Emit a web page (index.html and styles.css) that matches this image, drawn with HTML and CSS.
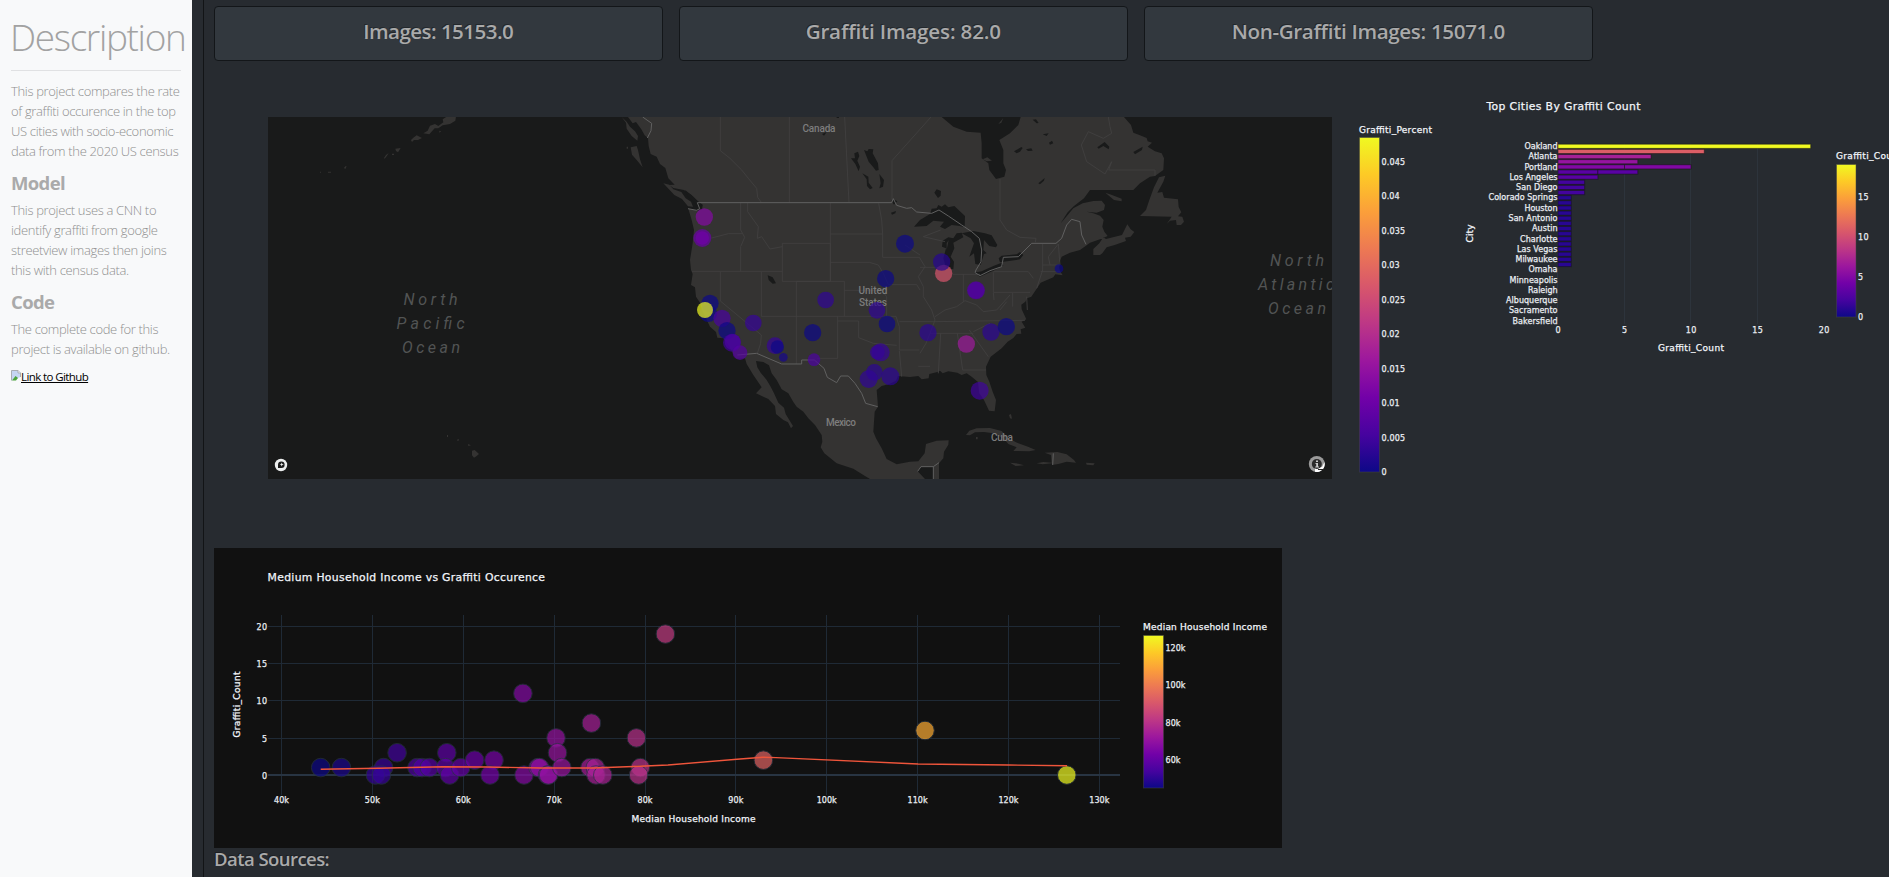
FILE: index.html
```html
<!DOCTYPE html>
<html lang="en">
<head>
<meta charset="utf-8">
<title>Graffiti Dashboard</title>
<link rel="stylesheet" href="styles.css">
</head>
<body>
<div class="page">
  <aside class="sidebar">
    <h1 class="display">Description</h1>
    <hr class="rule">
    <p class="lead">This project compares the rate<br>of graffiti occurence in the top<br>US cities with socio-economic<br>data from the 2020 US census</p>
    <h2 class="subhead">Model</h2>
    <p class="lead">This project uses a CNN to<br>identify graffiti from google<br>streetview images then joins<br>this with census data.</p>
    <h2 class="subhead">Code</h2>
    <p class="lead">The complete code for this<br>project is available on github.</p>
    <a class="repo" href="#"><svg class="broken" viewBox="0 0 10 11"><path d="M.5 10.5V.5H7L9.5 3V7" fill="#c5d5f2" stroke="#a9adb3"/><path d="M1 10.5 4.5 6 7 8 5 10.5Z" fill="#4ba43a"/><path d="M7 .5V3H9.5" fill="#fff" stroke="#a9adb3"/></svg><span class="repo-text">Link to Github</span></a>
  </aside>
  <main class="content">
    <section class="cards">
      <div class="card"><h4 class="stat stat-a">Images: 15153.0</h4></div>
      <div class="card"><h4 class="stat stat-b">Graffiti Images: 82.0</h4></div>
      <div class="card"><h4 class="stat stat-c">Non-Graffiti Images: 15071.0</h4></div>
    </section>
    <section class="plots">
      <svg class="plot" width="1246" height="450" viewBox="214 80 1246 450">
        <defs>
          <linearGradient id="plasma" x1="0" y1="1" x2="0" y2="0">
            <stop offset="0" stop-color="#0d0887"/><stop offset=".111" stop-color="#46039f"/><stop offset=".222" stop-color="#7201a8"/><stop offset=".333" stop-color="#9c179e"/><stop offset=".444" stop-color="#bd3786"/><stop offset=".556" stop-color="#d8576b"/><stop offset=".667" stop-color="#ed7953"/><stop offset=".778" stop-color="#fb9f3a"/><stop offset=".889" stop-color="#fdca26"/><stop offset="1" stop-color="#f0f921"/>
          </linearGradient>
          <clipPath id="mapclip"><rect x="268" y="117" width="1064" height="362"/></clipPath>
        </defs>
        <g clip-path="url(#mapclip)">
          <rect class="water" x="268" y="117" width="1064" height="362"/>
          <g transform="translate(260 110) scale(.33333)">
            <path class="land" d="M453 90 460 83 470 76 486 84 474 90 462 90 456 96ZM490 70 503 62 510 47 525 42 535 48 550 37 548 28 560 20 588 20 586 32 570 42 548 46 535 55 524 55 508 73ZM406 116 422 114 414 127 408 123ZM372 144 378 135 386 129 381 137 374 146ZM396 131H402V135H396ZM252 174 256 169H260L256 177ZM204 185H213V188H204ZM180 185H183V188H180ZM636 1022 644 1020 657 1032 650 1038 642 1043 636 1036ZM624 1002 633 1006 625 1008ZM591 989 597 987 596 992H592ZM561 975H564V981H561ZM538 62 544 64 538 68Z"/>
          </g>
          <g transform="translate(620 110) scale(.33333)">
            <path class="land" d="M24 21 38 40 48 36 64 58 74 76 84 84 86 108 92 132 110 140 120 162 136 174 145 205 164 224 148 225 160 234 192 240 215 256 233 273 248 285 246 300 234 297 237 303 205 296 215 330 222 360 218 400 210 450 213 480 218 492 213 525 225 532 228 560 240 578 248 605 258 625 270 650 288 666 292 683 310 685 325 705 340 732 348 746 375 745 380 762 400 795 425 832 408 850 430 860 445 867 465 888 468 912 490 930 504 937 513 955 519 948 497 912 492 893 475 878 462 850 452 830 440 810 422 788 412 772 408 753 430 756 447 766 455 790 470 810 485 838 505 850 520 876 530 890 550 905 565 925 585 945 605 975 607 995 602 1012 613 1030 650 1060 700 1076 735 1098 750 1107H915L893 1084 903 1070H940V1107H957V1060L970 1045 972 1025 985 1004 986 991 950 992 918 1002 914 1030 895 1054 870 1055 830 1063 800 1047 785 1015 768 985 760 965 764 905 774 890 770 840 785 828 808 822 828 812 834 798 870 801 895 798 905 808 926 805 928 792 955 785 960 782 968 790 985 784 1012 788 1025 795 1040 790 1055 800 1074 816 1078 850 1092 870 1107 902 1124 904 1128 870 1118 845 1108 815 1099 795 1098 770 1112 740 1145 715 1163 695 1180 684 1190 672 1204 671 1202 658 1216 653 1205 635 1219 628 1205 598 1204 584 1216 575 1221 565 1234 560 1253 532 1262 518 1300 502 1306 493 1328 496 1322 486 1318 476 1318 458 1325 440 1350 428 1380 420 1398 407 1410 398 1440 388 1463 378 1453 365 1447 350 1451 330 1440 317 1420 310 1400 305 1430 308 1452 300 1455 285 1445 272 1420 273 1388 280 1360 295 1335 325 1322 340 1343 307 1362 288 1392 265 1410 240H1540L1560 220 1590 200 1605 198 1630 180 1632 145 1625 130 1605 124 1583 110 1596 98 1583 94 1580 84 1560 76 1540 68 1533 45 1512 21ZM32 112 50 108 54 120 60 148 68 172 50 150 36 134ZM5 21 20 35 30 50 45 64 54 78 52 92 35 78 20 56 18 38ZM130 220 148 224 160 238 184 246 197 265 213 275 219 290 204 289 186 267 163 255ZM1440 435 1420 435 1420 417 1438 400 1450 382 1458 387 1506 375 1522 343 1532 358 1543 366 1532 380 1515 383 1518 393 1484 405 1460 412 1447 430ZM1560 318 1578 300 1588 270 1602 232 1617 202 1636 197 1630 215 1612 248 1627 246 1632 263 1674 268 1676 291 1684 307 1674 319 1687 320 1692 335 1683 345 1670 345 1668 330 1650 332 1640 342 1655 320ZM1456 248 1474 254 1505 266 1505 274 1482 270ZM1038 975 1048 962 1070 955 1110 954 1145 963 1165 985 1195 1000 1224 1010 1247 1020 1228 1024 1180 1023 1190 1012 1165 1002 1150 985 1120 970 1092 966 1065 967 1050 976ZM1250 1060 1270 1056 1295 1058 1293 1035 1274 1028 1312 1026 1340 1033 1362 1050 1368 1058 1340 1055 1315 1062 1300 1064 1295 1060 1268 1063ZM1170 1058 1195 1061 1212 1066 1187 1068ZM1398 1058 1424 1060 1420 1066 1400 1064ZM1167 915 1173 912 1176 926 1170 925ZM1068 981H1073V988H1068Z"/>
            <path class="water" d="M965 21 1000 50 1040 65 1082 68 1085 100 1085 145 1105 160 1108 180 1128 207 1153 200 1158 180 1150 160 1150 120 1138 90 1170 70 1195 45 1202 21ZM882 350 900 330 930 312 935 296 950 295 955 285 965 290 975 283 985 292 1003 288 1035 318 1034 352 1020 348 995 345 975 357 960 350 972 335 940 332 920 348ZM966 410 968 392 985 382 1000 385 1010 370 1025 368 1030 382 1000 398 1003 415 992 440 1002 455 1000 478 978 473 970 445 978 415ZM1025 370 1060 363 1095 370 1115 376 1132 405 1128 412 1108 408 1092 390 1090 420 1100 430 1092 432 1082 465 1066 462 1062 430 1048 440 1062 400 1052 385ZM1062 488 1085 484 1120 468 1145 458 1150 467 1120 482 1080 500ZM1136 445 1145 437 1190 433 1200 426 1210 435 1200 448 1140 457ZM732 120 742 124 746 117 760 118 758 130 774 160 776 180 768 182 760 172 746 155ZM693 145 705 145 703 130 714 125 718 138 712 152 720 170 716 184 706 162ZM727 190 745 200 746 218 758 234 750 238 741 228 740 208ZM778 192 792 210 789 230 778 235 782 220ZM443 496 458 502 468 520 458 521 446 510ZM943 248 950 238 963 243 962 257 954 264ZM813 270 820 268 832 274 822 284ZM813 308 828 303 826 310 816 314ZM606 72 620 66 612 77ZM650 21H657V24H650ZM195 240 215 256 235 275 248 285 238 292 220 276 205 262ZM1182 124 1204 111 1208 114 1200 125 1190 130ZM1218 118 1234 115 1238 122 1224 123ZM1268 73 1286 70 1280 78ZM1287 98 1296 92 1300 100 1290 104ZM1238 29 1248 28 1256 39 1250 40ZM1255 220 1274 204 1272 212 1260 223ZM1432 112 1454 96 1468 110 1466 118 1450 108 1436 116ZM1540 126 1568 110 1566 120 1545 133ZM1135 42 1150 24 1144 38Z"/>
            <path class="land" d="M1088 148 1102 142 1116 152 1100 154ZM20 110H24V116H20ZM980 400 986 390 980 420Z"/>
            <path class="state" d="M301 21V122L330 145 365 180 385 205 410 235 413 262 424 277M508 21V277M674 21 687 277M816 277V152L933 21M1140 207V330L1160 360 1200 382 1248 385 1246 397M1465 21 1470 50 1475 70 1450 85 1405 65 1384 105 1400 155 1455 192 1475 155 1466 180H1605V197M362 279V360L374 382 362 410V484M275 384 325 371H366M216 484H487M383 279V305L415 350 412 385 425 380 450 417 487 410M487 400H631V514H487ZM631 279V514M631 372H788M631 457H748L775 465 790 490 805 524H890L900 540M776 280 785 330 788 372V442H898L915 470 895 500 910 530 910 560 935 600 945 630M301 485V573L424 675 422 700 412 730M424 485V619M424 619H828M529 514V762M529 514H673V619M673 541H785L800 560V619M653 619V745H592M653 633H716V683L760 700 830 706M828 619 838 650 838 720H898M838 722 845 800M838 635H945L1215 631M930 670H1060M900 730 918 700 930 670 945 630M962 670 955 790M1012 670 1028 780H1098M1048 660 1105 740M895 769H930M945 620 975 600 1010 590 1035 572 1070 585 1090 605 1130 600 1170 555M1030 493V575M998 493H1080M1120 487V547H1230M1120 548 1122 570M1220 560 1222 600M1060 665 1110 640M1268 402V480L1250 535M1290 465 1285 440 1315 402 1320 465H1268M1262 485H1320M1120 485H1225L1240 505M900 472H978M855 405 900 435M962 360 910 380 975 395M1140 600 1160 575M1178 548V590"/>
            <path class="border" d="M68 21 95 40 93 62 82 84M204 296 230 301 239 296 232 278H815L820 266 830 286 860 295 875 293 890 306 935 310 957 300 985 318 1025 345 1055 365 1078 385 1085 420 1083 455 1068 480 1065 488 1080 497 1110 482 1145 470 1150 442 1195 440 1235 400H1308L1325 385 1340 345 1355 328 1380 335 1385 375 1398 403M352 735 410 730 485 762H545V750H583L612 775 622 802 650 818 662 798 685 798 705 820 725 850 737 880 773 890M893 1084 903 1070H940V1107M940 1070 957 1058M1300 1030 1298 1065"/>
          </g>
          <g class="place">
            <text x="819" y="132" text-anchor="middle" textLength="33">Canada</text>
            <text x="873" y="293.5" text-anchor="middle" textLength="29">United</text>
            <text x="873" y="305.5" text-anchor="middle" textLength="28">States</text>
            <text x="841" y="425.5" text-anchor="middle" textLength="30">Mexico</text>
            <text x="1002" y="440.5" text-anchor="middle" textLength="22">Cuba</text>
          </g>
          <g class="ocean">
            <text x="403.5" y="305" textLength="54">North</text>
            <text x="396.5" y="329" textLength="68">Pacific</text>
            <text x="402" y="353" textLength="58">Ocean</text>
            <text x="1270" y="266" textLength="54">North</text>
            <text x="1258" y="290" textLength="76">Atlantic</text>
            <text x="1268" y="314" textLength="58">Ocean</text>
          </g>
          <g id="cities" transform="translate(620 110) scale(.33333)"></g>
          <circle cx="281" cy="465" r="6.2" fill="#eceeee"/><path d="M278 468V464.500A3.300 3.300 0 1 1 281.500 468Z" fill="#191a1a"/><path d="M281.700 462.500 282.300 464 283.800 464.500 282.300 465 281.700 466.500 281.100 465 279.600 464.500 281.100 464Z" fill="#eceeee"/>
          <circle cx="1316.800" cy="464" r="8" fill="#9a9a9a"/><path d="M1324.500 462A8 8 0 0 1 1315 471.800V468L1322 467Z" fill="#fff"/><circle cx="1316.800" cy="464" r="5" fill="#2a2a2a"/><path d="M1316 460.500h2v1.500h-2zM1315.500 463h2.500v3.500h1v1h-3.800v-1h1v-2.500h-.7z" fill="#c8c8c8"/><path d="M1318 469.500h6" stroke="#222"/>
        </g>
        <text class="axis" x="1359" y="132.500" textLength="73">Graffiti_Percent</text>
        <rect class="bar" x="1359.500" y="137.500" width="20" height="334.500"/>
        <g class="tick">
          <text x="1381.500" y="165" textLength="23.500">0.045</text><text x="1381.500" y="199" textLength="18">0.04</text><text x="1381.500" y="234" textLength="23.500">0.035</text><text x="1381.500" y="268" textLength="18">0.03</text><text x="1381.500" y="303" textLength="23.500">0.025</text><text x="1381.500" y="337" textLength="18">0.02</text><text x="1381.500" y="372" textLength="23.500">0.015</text><text x="1381.500" y="406" textLength="18">0.01</text><text x="1381.500" y="441" textLength="23.500">0.005</text><text x="1381.500" y="475">0</text>
        </g>
      </svg>
      <svg class="plot" width="429" height="450" viewBox="1460 80 429 450">
        <text class="title" x="1486.500" y="109.500" textLength="154">Top Cities By Graffiti Count</text>
        <path class="grid-soft" d="M1624.500 143.500V324M1690.500 143.500V324M1757.500 143.500V324"/>
        <path class="zero-soft" d="M1557.500 143.500V324"/>
        <g id="bars"></g>
        <g class="tick" id="names"></g>
        <g class="tick" text-anchor="middle"><text x="1558" y="332.500">0</text><text x="1624.500" y="332.500">5</text><text x="1691" y="332.500" textLength="10.500">10</text><text x="1757.500" y="332.500" textLength="10.500">15</text><text x="1824" y="332.500" textLength="10.500">20</text></g>
        <text class="axis" x="1658" y="350.500" textLength="66">Graffiti_Count</text>
        <text class="axis" transform="translate(1473 242.500) rotate(-90)" textLength="18">City</text>
        <text class="axis" x="1836" y="158.500" textLength="66">Graffiti_Count</text>
        <rect class="bar" x="1836.500" y="164.500" width="19.500" height="152.500"/>
        <g class="tick"><text x="1858" y="200" textLength="10.500">15</text><text x="1858" y="240" textLength="10.500">10</text><text x="1858" y="280">5</text><text x="1858" y="320">0</text></g>
      </svg>
    </section>
    <section class="income">
      <svg class="plot" width="1068" height="300" viewBox="214 548 1068 300">
        <rect x="214" y="548" width="1068" height="300" fill="#111"/>
        <text class="title" x="267.500" y="581" textLength="277.500">Medium Household Income vs Graffiti Occurence</text>
        <path class="grid" d="M281.500 615V795M372.500 615V795M463.500 615V795M554.500 615V795M645.500 615V795M735.500 615V795M826.500 615V795M917.500 615V795M1008.500 615V795M1099.500 615V795M268 626.500H1120M268 663.500H1120M268 700.500H1120M268 738.500H1120"/>
        <path class="zero" d="M268 775H1120"/>
        <g id="points"></g>
        <path class="trend" d="M320.700 769.300 378 768.300 443 766.800 486 767 540 768 593 768 640 766.300 668 765 740 759 763 757.200 776 757.600 918 764 1008 765 1067 765.700"/>
        <g class="tick" id="incomeTicks" text-anchor="middle"></g>
        <g class="tick" text-anchor="end"><text x="267" y="630" textLength="10.500">20</text><text x="267" y="667" textLength="10.500">15</text><text x="267" y="704" textLength="10.500">10</text><text x="267" y="741.500">5</text><text x="267" y="778.500">0</text></g>
        <text class="axis" x="631.500" y="822" textLength="124">Median Household Income</text>
        <text class="axis" transform="translate(240 737.500) rotate(-90)" textLength="66">Graffiti_Count</text>
        <text class="axis" x="1143" y="630" textLength="124">Median Household Income</text>
        <rect class="bar" x="1143.500" y="635.500" width="20" height="152.500"/>
        <g class="tick"><text x="1165.500" y="650.500" textLength="20">120k</text><text x="1165.500" y="687.500" textLength="20">100k</text><text x="1165.500" y="725.500" textLength="15">80k</text><text x="1165.500" y="762.500" textLength="15">60k</text></g>
      </svg>
      <h4 class="sources">Data Sources:</h4>
    </section>
  </main>
</div>
<script src="script.js"></script>
</body>
</html>
```

FILE: styles.css
```css
* { box-sizing: border-box; }
body { margin: 0; background: #272b30; color: #aaa; font-family: "Open Sans", sans-serif; overflow: hidden; }
.page { display: flex; width: 1889px; height: 877px; overflow: hidden; }
.sidebar { width: 192px; flex: none; background: #f8f9fa; padding: 10px 11px; white-space: nowrap; margin-right: 11px; }
.display { margin: 0; height: 60px; color: #a2a2a2; font-size: 37px; line-height: 54px; font-weight: 300; letter-spacing: -1.350px; text-indent: -1px; }
.rule { margin: 0 0 10px; border: 0; height: 1px; background: #e0e1e3; }
.lead { margin: 0; color: #8f8f8f; font-size: 13px; line-height: 20px; font-weight: 300; letter-spacing: -0.340px; }
.subhead { margin: 9px 0 4px; font-size: 18.500px; line-height: 26px; font-weight: 700; letter-spacing: -0.650px; }
.repo { display: flex; align-items: center; margin-top: 9px; height: 18px; color: #000; text-decoration: none; font-size: 11.500px; letter-spacing: -0.600px; }
.repo-text { text-decoration: underline; line-height: 18px; }
.broken { width: 10px; height: 11px; margin-top: -4px; }
.content { flex: none; width: 1686px; border-left: 1px solid #121416; padding: 6px 0 0 10px; }
.cards { display: flex; gap: 16.500px; height: 74px; }
.card { flex: none; width: 448.500px; height: 55px; padding-top: 8px; background: #32383e; border: 1px solid #131619; border-radius: 4px; text-align: center; }
.stat, .sources { margin: 0; font-size: 20.500px; line-height: 32px; font-weight: 600; text-shadow: -1px -1px 0 rgba(0,0,0,.3); }
.stat-a { letter-spacing: -0.520px; }
.stat-b { letter-spacing: -0.130px; }
.stat-c { letter-spacing: -0.290px; }
.plots { display: flex; height: 468px; }
.plot { display: block; flex: none; overflow: hidden; }
.sources { line-height: 22px; font-size: 18.500px; letter-spacing: -0.550px; }
.water { fill: #191a1a; }
.land { fill: #343332; }
.state, .border { fill: none; stroke: #424141; stroke-width: 2.500; }
.border { stroke: #606060; stroke-width: 3; }
.place { fill: #7d7d7d; font: 500 10px Roboto, sans-serif; }
.ocean { fill: #525454; font: italic 400 16px Roboto, sans-serif; }
.title, .axis, .tick { fill: #f2f5fa; font-family: "DejaVu Sans", sans-serif; stroke: #f2f5fa; stroke-width: .25px; }
.title { font-size: 10.800px; }
.axis { font-size: 9px; }
.tick { font-size: 8px; fill: #e2e5ea; }
.bar { fill: url(#plasma); stroke: rgba(68,68,68,.5); }
.grid { fill: none; stroke: #1f2a36; }
.zero { stroke: #283442; stroke-width: 2; }
.grid-soft { stroke: #2d343c; }
.zero-soft { stroke: #283442; }
.trend { fill: none; stroke: #ef553b; stroke-width: 1.400; }
```

FILE: script.js
```js
const NS = 'http://www.w3.org/2000/svg';
const scale = ['0d0887', '46039f', '7201a8', '9c179e', 'bd3786', 'd8576b', 'ed7953', 'fb9f3a', 'fdca26', 'f0f921'];

function colour(t) {
  const p = Math.max(0, Math.min(1, t)) * 9;
  const i = Math.min(8, Math.floor(p));
  const f = p - i;
  const part = (s, k) => parseInt(s.substr(k * 2, 2), 16);
  return 'rgb(' + [0, 1, 2].map(k => Math.round(part(scale[i], k) * (1 - f) + part(scale[i + 1], k) * f)) + ')';
}

function add(id, tag, attrs, text) {
  const el = document.createElementNS(NS, tag);
  for (const k in attrs) el.setAttribute(k, attrs[k]);
  if (text) el.textContent = text;
  document.getElementById(id).appendChild(el);
}

// Map markers: x, y, radius, share of the colour range
[[253,321,26,.27],[247,384,27,.2],[247,384,20,.22],[270,580,26,0],[265,610,26,0],[255,600,24,1],[306,625,26,.12],[321,662,26,0],
 [336,698,27,.1],[338,696,24,.12],[360,728,22,.15],[400,639,25,.08],[465,707,25,.08],[472,711,20,0],[490,742,13,.02],[578,668,26,0],
 [582,749,19,.13],[617,570,25,.07],[855,401,27,0],[797,506,26,0],[771,601,25,.07],[801,642,25,0],[971,490,26,.55],[965,456,26,.05],
 [1068,541,27,.14],[1068,541,25,.14],[924,668,26,.06],[1039,702,26,.34],[1113,666,26,.06],[1159,650,26,0],[1317,476,13,0],
 [782,727,27,.08],[772,727,22,.08],[763,787,25,.06],[746,807,27,.07],[811,799,27,.06],[1079,842,27,.1]
].forEach(([cx, cy, r, t]) => add('cities', 'circle', { cx, cy, r, fill: colour(t), opacity: .7 }));

// Incidents per city, most first; some cities hold two stacked records
const counts = [[19], [11], [7], [6], [5, 5], [3, 3], [3], [2], [2], [2]].concat(Array(14).fill([1]));
counts.forEach((parts, row) => {
  let x = 1558;
  parts.forEach(n => {
    add('bars', 'rect', { x, y: 144.2 + row * 5.14, width: n * 13.3, height: 4.2, fill: colour(n / 19), stroke: '#111111', 'stroke-opacity': .5 });
    x += n * 13.3;
  });
});

[['Oakland', 33], ['Atlanta', 29], ['Portland', 33], ['Los Angeles', 48], ['San Diego', 41.5], ['Colorado Springs', 69], ['Houston', 33],
 ['San Antonio', 49], ['Austin', 25.5], ['Charlotte', 37.5], ['Las Vegas', 40.5], ['Milwaukee', 42], ['Omaha', 29], ['Minneapolis', 48],
 ['Raleigh', 29.5], ['Albuquerque', 51.5], ['Sacramento', 48.5], ['Bakersfield', 45]
].forEach(([name, w], i) => add('names', 'text', { x: 1557.5, y: 149 + i * 10.28, 'text-anchor': 'end', textLength: w }, name));

// Household income plot: x position, count
[[320.7,1],[341.4,1],[383.6,1],[375.4,0],[381.4,0],[397.1,3],[417,1],[422,1],[429.3,1],[446.8,3],[445.4,1],[449.6,0],[460.7,1],
 [474.6,2],[494,2],[490,0],[522.9,11],[524,0],[538,1],[539.6,1],[547.5,0],[548.6,0],[556,5],[557.5,3],[561.8,1],[591.4,7],[590,1],
 [595.3,1],[596,0],[602.8,0],[636.4,5],[640.3,1],[638.6,0],[665.4,19],[763.4,2],[925,6],[1066.8,0]
].forEach(([cx, n]) => add('points', 'circle', { cx, cy: 775 - n * 7.42, r: 9.3, fill: colour((cx - 320.7) / 746), opacity: .7, stroke: '#283442', 'stroke-width': 1 }));

for (let k = 0; k < 10; k++) {
  add('incomeTicks', 'text', { x: 281.5 + k * 90.87, y: 803, textLength: k < 6 ? 15 : 20 }, (40 + k * 10) + 'k');
}
```
